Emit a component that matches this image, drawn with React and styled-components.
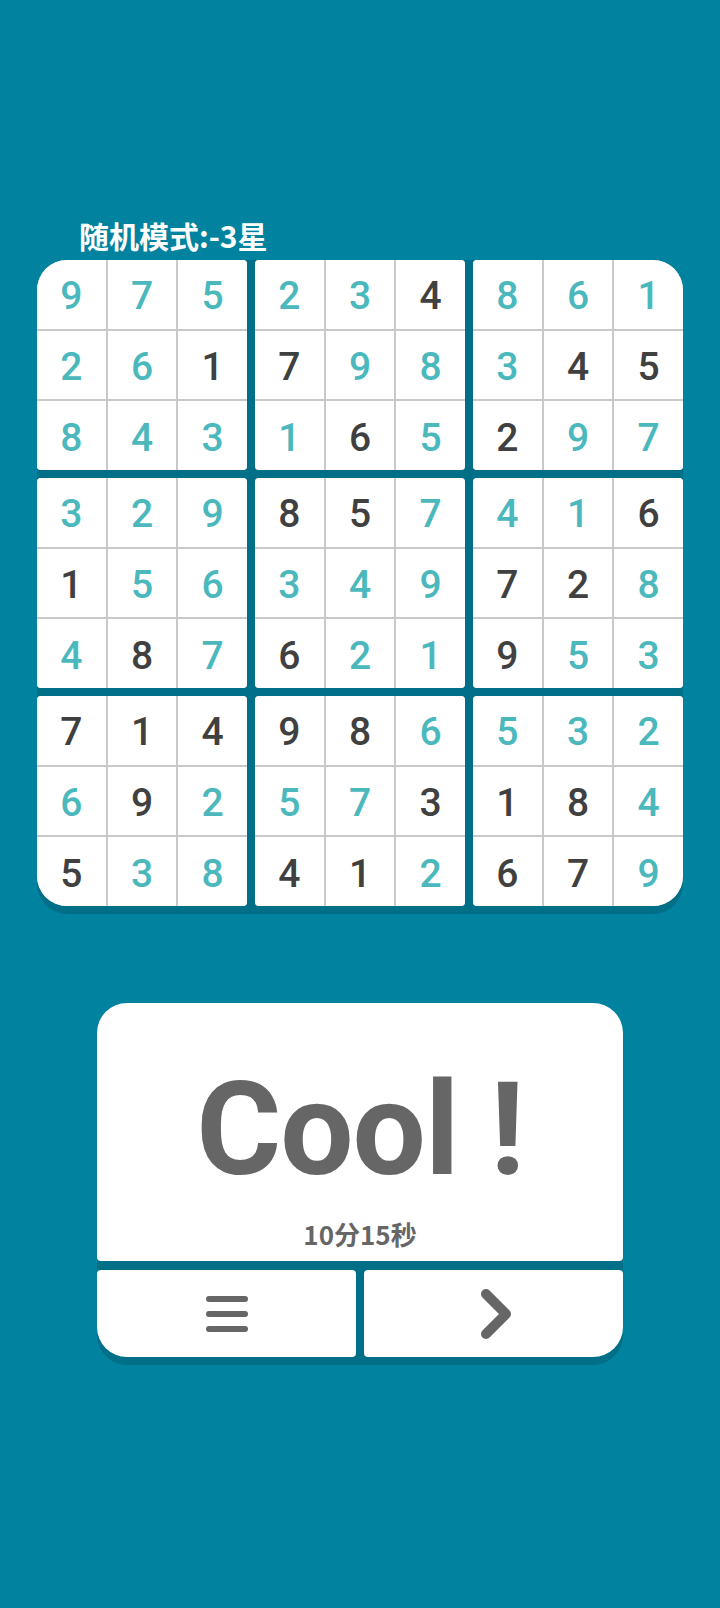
import React from "react";
import styled, { createGlobalStyle } from "styled-components";

const BG = "#01839f";
const DARK = "#016f88";
const TEAL = "#4ab8bc";
const INK = "#404040";
const GREY = "#666666";

const Global = createGlobalStyle`
  html, body { margin: 0; padding: 0; background: ${BG}; }
  body { font-family: "Roboto", "Noto Sans CJK SC", sans-serif; }
`;

const Page = styled.div`
  width: 720px;
  min-height: 1608px;
  background: ${BG};
  display: flex;
  flex-direction: column;
  padding-top: 218px;
  box-sizing: border-box;
`;

const Title = styled.div`
  margin: 0 0 8px 79px;
  color: #ffffff;
  font-family: "Noto Sans CJK SC", sans-serif;
  font-weight: 700;
  font-size: 30px;
  line-height: 34px;
`;

const Board = styled.div`
  margin-left: 37px;
  width: 646px;
  height: 646px;
  display: grid;
  grid-template-columns: repeat(3, 210px);
  grid-template-rows: repeat(3, 210px);
  gap: 8px;
  background: ${DARK};
  border-radius: 30px;
  overflow: hidden;
  box-shadow: 0 8px 0 ${DARK};
`;

const Block = styled.div`
  display: grid;
  grid-template-columns: repeat(3, 1fr);
  grid-template-rows: repeat(3, 1fr);
  gap: 2px;
  background: #c9c9c9;
  border-radius: 4px;
  overflow: hidden;
`;

const Cell = styled.div`
  background: #ffffff;
  display: flex;
  align-items: center;
  justify-content: center;
  padding-top: 4px;
  box-sizing: border-box;
  font-family: "Roboto", sans-serif;
  font-weight: 500;
  font-size: 39px;
  color: ${(p) => (p.$given ? INK : TEAL)};
`;

const Card = styled.div`
  margin: 97px 0 0 97px;
  width: 526px;
  display: flex;
  flex-direction: column;
  gap: 9px;
  background: ${DARK};
  border-radius: 30px;
  overflow: hidden;
  box-shadow: 0 8px 0 ${DARK};
`;

const Panel = styled.div`
  height: 258px;
  background: #fff;
  border-radius: 4px;
  display: flex;
  flex-direction: column;
  align-items: center;
  padding-top: 62px;
  box-sizing: border-box;
`;

const Big = styled.div`
  font-family: "Roboto", sans-serif;
  font-weight: 700;
  font-size: 130px;
  line-height: 130px;
  letter-spacing: -1px;
  color: ${GREY};
`;

const Time = styled.div`
  margin-top: 23px;
  font-family: "Noto Sans CJK SC", sans-serif;
  font-weight: 700;
  font-size: 26px;
  line-height: 32px;
  color: ${GREY};
`;

const Buttons = styled.div`
  display: grid;
  grid-template-columns: 1fr 1fr;
  gap: 8px;
  height: 87px;
`;

const Btn = styled.button`
  border: 0;
  margin: 0;
  padding: 0 0 0 ${(p) => p.$shift || 0}px;
  background: #fff;
  border-radius: 4px;
  display: flex;
  align-items: center;
  justify-content: center;
  cursor: pointer;
`;

const rows = [
  "975234861",
  "261798345",
  "843165297",
  "329857416",
  "156349728",
  "487621953",
  "714986532",
  "692573184",
  "538412679",
];
const given = [
  "000001000",
  "001100011",
  "000010100",
  "000110001",
  "100000110",
  "010100100",
  "111110000",
  "010001110",
  "100110110",
];

const MenuIcon = () => (
  <svg width="44" height="38" viewBox="0 0 44 38">
    <g stroke={GREY} strokeWidth="6" strokeLinecap="round">
      <line x1="4" y1="4" x2="40" y2="4" />
      <line x1="4" y1="19" x2="40" y2="19" />
      <line x1="4" y1="34" x2="40" y2="34" />
    </g>
  </svg>
);

const Chevron = () => (
  <svg width="34" height="52" viewBox="0 0 34 52">
    <polyline
      points="6,6 26,26 6,46"
      fill="none"
      stroke={GREY}
      strokeWidth="10"
      strokeLinecap="round"
      strokeLinejoin="round"
    />
  </svg>
);

export default function App() {
  const blocks = [];
  for (let br = 0; br < 3; br++) {
    for (let bc = 0; bc < 3; bc++) {
      const cells = [];
      for (let r = 0; r < 3; r++) {
        for (let c = 0; c < 3; c++) {
          const R = br * 3 + r;
          const C = bc * 3 + c;
          cells.push(
            <Cell key={`${r}-${c}`} $given={given[R][C] === "1"}>
              {rows[R][C]}
            </Cell>
          );
        }
      }
      blocks.push(<Block key={`${br}-${bc}`}>{cells}</Block>);
    }
  }
  return (
    <>
      <Global />
      <Page>
        <Title>随机模式:-3星</Title>
        <Board>{blocks}</Board>
        <Card>
          <Panel>
            <Big>Cool !</Big>
            <Time>10分15秒</Time>
          </Panel>
          <Buttons>
            <Btn aria-label="menu">
              <MenuIcon />
            </Btn>
            <Btn aria-label="next" $shift={7}>
              <Chevron />
            </Btn>
          </Buttons>
        </Card>
      </Page>
    </>
  );
}
